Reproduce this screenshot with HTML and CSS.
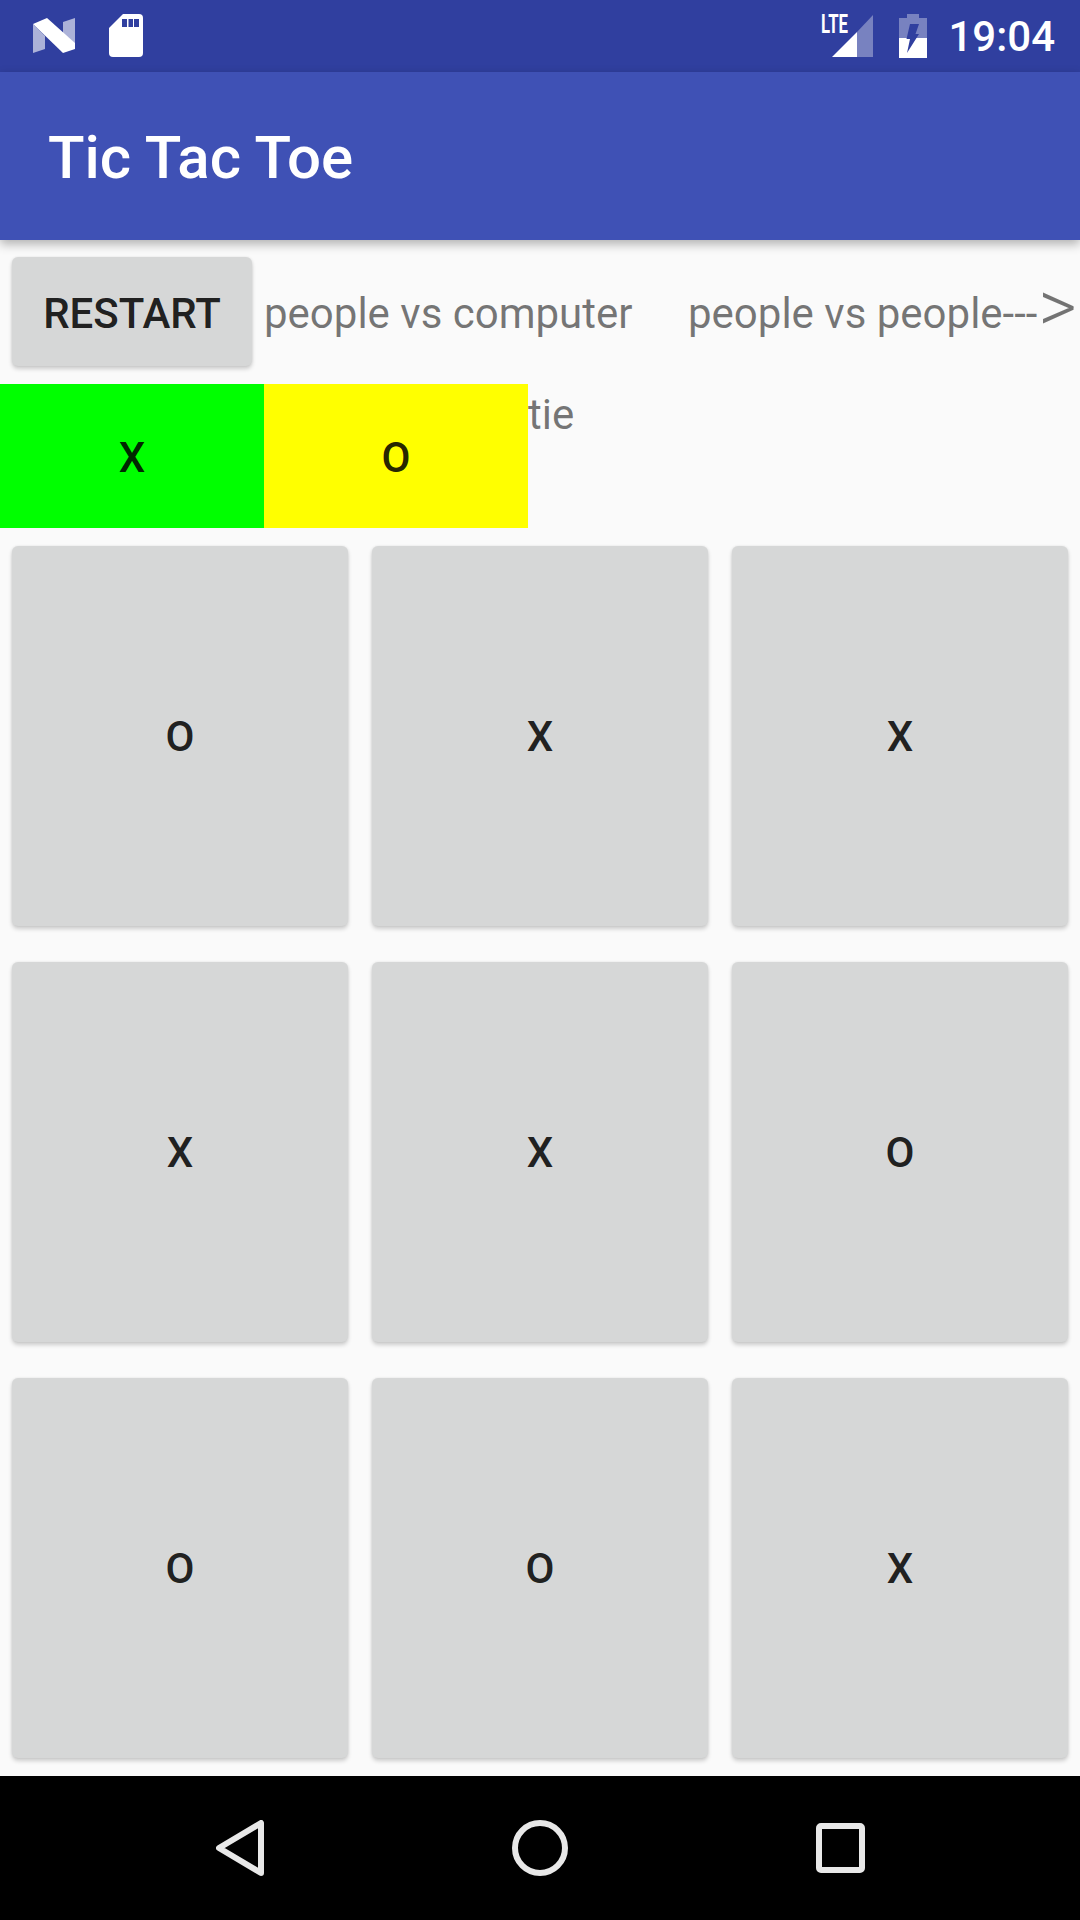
FILE: index.html

```html
<!DOCTYPE html>
<html>
<head>
    <meta charset="utf-8">
    <title>Tic Tac Toe</title>
    <link rel="stylesheet" href="styles.css">
</head>
<body>
<div class="screen">
    <div class="statusBar">
        <svg class="statusIcon" width="42" height="44" viewBox="0 0 42 44">
            <polygon points="0,10 12,22 12,35 0,39" fill="#fff" fill-opacity="0.6"/>
            <polygon points="30,8 42,4 42,30 30,19" fill="#fff" fill-opacity="0.6"/>
            <polygon points="0,10 14,4 42,29 42,35 30,39" fill="#fff"/>
        </svg>
        <svg class="statusIcon sdIcon" width="34" height="44" viewBox="0 0 34 44">
            <path d="M14 0H30Q34 0 34 4V39Q34 43 30 43H4Q0 43 0 39V14Z" fill="#fff"/>
            <path d="M13 5H18V13H13ZM19.5 5H24V13H19.5ZM25 5H30V13H25Z" fill="#303f9f"/>
        </svg>
        <div class="statusRight">
            <svg class="statusIcon signalIcon" width="52" height="44" viewBox="0 0 52 44">
                <text class="lteText" x="0" y="19" textLength="27" lengthAdjust="spacingAndGlyphs">LTE</text>
                <polygon points="36,18 52,1 52,43 36,43" fill="#fff" fill-opacity="0.35"/>
                <polygon points="11,43 36,18 36,43" fill="#fff"/>
            </svg>
            <svg class="statusIcon batteryIcon" width="28" height="44" viewBox="0 0 28 44">
                <path d="M8 0H20V4H28V24H0V4H8Z" fill="#fff" fill-opacity="0.35"/>
                <rect x="0" y="24" width="28" height="20" fill="#fff"/>
                <path d="M11 10H20L16.5 20H20L8 39L11 25H7.5Z" fill="#303f9f"/>
            </svg>
            <span class="clock">19:04</span>
        </div>
    </div>

    <div class="appBar">Tic Tac Toe</div>

    <div class="content">
        <div class="modeRow">
            <div class="restartCell"><button class="gameBtn restartBtn">RESTART</button></div>
            <span class="modeText vsComputer">people vs computer</span>
            <span class="modeText">people vs people---<span class="bigArrow">&gt;</span></span>
        </div>
        <div class="scoreRow">
            <div class="scoreBox scoreX">X</div>
            <div class="scoreBox scoreO">O</div>
            <span class="modeText tieText">tie</span>
        </div>
        <div class="board">
            <div class="cell"><button class="gameBtn">O</button></div>
            <div class="cell"><button class="gameBtn">X</button></div>
            <div class="cell"><button class="gameBtn">X</button></div>
            <div class="cell"><button class="gameBtn">X</button></div>
            <div class="cell"><button class="gameBtn">X</button></div>
            <div class="cell"><button class="gameBtn">O</button></div>
            <div class="cell"><button class="gameBtn">O</button></div>
            <div class="cell"><button class="gameBtn">O</button></div>
            <div class="cell"><button class="gameBtn">X</button></div>
        </div>
    </div>

    <div class="navBar">
        <svg width="48" height="56" viewBox="0 0 48 56">
            <path d="M45 3V53L3 28Z" class="navShape"/>
        </svg>
        <svg width="56" height="56" viewBox="0 0 56 56">
            <circle cx="28" cy="28" r="25" class="navShape"/>
        </svg>
        <svg width="49" height="50" viewBox="0 0 49 50">
            <rect x="3" y="3" width="43" height="44" rx="2" class="navShape"/>
        </svg>
    </div>
</div>
</body>
</html>
```

FILE: styles.css

```css
* {
    box-sizing: border-box;
}

body {
    margin: 0;
    font-family: Roboto, "Liberation Sans", sans-serif;
}

.screen {
    width: 1080px;
    height: 1920px;
    display: flex;
    flex-direction: column;
    overflow: hidden;
    background-color: #fafafa;
}

/* status bar */
.statusBar {
    height: 72px;
    flex: none;
    display: flex;
    align-items: center;
    padding: 0 25px 0 33px;
    background-color: #303f9f;
}

.statusIcon {
    display: block;
    flex: none;
}

.sdIcon {
    margin-left: 34px;
}

.signalIcon {
    overflow: visible;
}

.statusRight {
    margin-left: auto;
    display: flex;
    align-items: center;
}

.batteryIcon {
    margin-left: 26px;
    margin-right: 21px;
}

.lteText {
    font-family: Roboto, sans-serif;
    font-size: 25px;
    font-weight: 700;
    fill: #fff;
}

.clock {
    color: #fff;
    font-size: 42px;
    font-weight: 500;
}

/* app bar */
.appBar {
    position: relative;
    height: 168px;
    flex: none;
    display: flex;
    align-items: center;
    padding: 2px 0 0 48px;
    color: #fff;
    font-size: 60px;
    font-weight: 500;
    background-color: #3f51b5;
    box-shadow: 0 4px 10px rgba(0, 0, 0, 0.3);
}

.content {
    flex: 1;
    display: flex;
    flex-direction: column;
    min-height: 0;
}

.gameBtn {
    display: block;
    width: 100%;
    height: 100%;
    padding: 1px 0 0;
    border: none;
    border-radius: 6px;
    background-color: #d6d7d7;
    color: rgba(0, 0, 0, 0.87);
    font-family: inherit;
    font-size: 42px;
    font-weight: 500;
    box-shadow: 0 3px 4px rgba(0, 0, 0, 0.18), 0 0 3px rgba(0, 0, 0, 0.08);
}

.restartBtn {
    padding-top: 4px;
}

/* top rows */
.modeRow {
    height: 144px;
    flex: none;
    display: flex;
    align-items: center;
}

.restartCell {
    width: 264px;
    height: 100%;
    flex: none;
    padding: 17px 12px 18px;
}

.modeText {
    color: rgba(0, 0, 0, 0.54);
    font-size: 42px;
    white-space: nowrap;
    padding-top: 2px;
}

/* the arrow head is drawn much larger and thinner than the dashes */
.bigArrow {
    margin-left: 1px;
    font-size: 74px;
    font-weight: 300;
    line-height: 0;
    vertical-align: -4px;
}

.vsComputer {
    width: 424px;
    flex: none;
}

.scoreRow {
    height: 144px;
    flex: none;
    display: flex;
}

.scoreBox {
    width: 264px;
    display: flex;
    align-items: center;
    justify-content: center;
    padding-top: 2px;
    color: rgba(0, 0, 0, 0.87);
    font-size: 42px;
    font-weight: 500;
}

.scoreX {
    background-color: #00ff00;
}

.scoreO {
    background-color: #ffff00;
}

.tieText {
    padding-top: 6px;
}

/* board */
.board {
    flex: 1;
    display: grid;
    grid-template-columns: repeat(3, 1fr);
    grid-template-rows: repeat(3, 1fr);
    min-height: 0;
}

.cell {
    padding: 18px 12px 18px;
    min-height: 0;
}

/* nav bar */
.navBar {
    height: 144px;
    flex: none;
    position: relative;
    display: grid;
    grid-template-columns: 216px 48px 248px 56px 248px 49px;
    align-items: center;
    background-color: #000;
}

.navBar svg {
    display: block;
}

.navBar svg:nth-child(1) {
    grid-column: 2;
}

.navBar svg:nth-child(2) {
    grid-column: 4;
}

.navBar svg:nth-child(3) {
    grid-column: 6;
}

.navShape {
    fill: none;
    stroke: #e8e8e8;
    stroke-width: 6;
    stroke-linejoin: round;
}
```
